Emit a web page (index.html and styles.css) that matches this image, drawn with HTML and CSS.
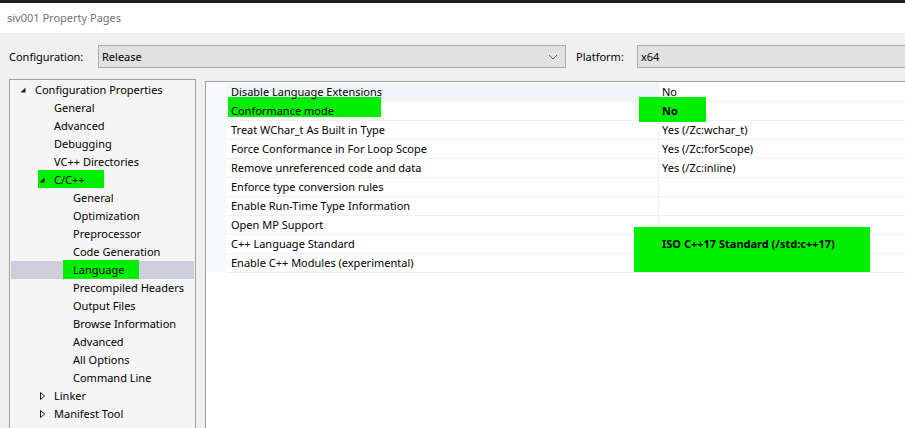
FILE: index.html
```html
<!DOCTYPE html>
<html>
<head>
<meta charset="utf-8">
<link rel="stylesheet" href="styles.css">
</head>
<body>
<div class="window">
  <div class="topstrip"></div>
  <div class="titlebar">siv001 Property Pages</div>
  <div class="main">
    <div class="config-row">
      <span class="label cfg-label">Configuration:</span>
      <div class="combo cfg-combo">
        <span>Release</span>
        <svg class="chev" width="10" height="6" viewBox="0 0 10 6"><path d="M1 1 L5 5 L9 1" fill="none" stroke="#606060" stroke-width="1"/></svg>
      </div>
      <span class="label plat-label">Platform:</span>
      <div class="combo plat-combo"><span>x64</span></div>
    </div>
    <div class="content">
      <div class="tree">
        <div class="node l0"><svg class="exp" width="6" height="6" viewBox="0 0 6 6"><polygon points="5.5,0.5 5.5,5.5 0.5,5.5" fill="#1e1e1e"/></svg><span>Configuration Properties</span></div>
        <div class="node l1"><span>General</span></div>
        <div class="node l1"><span>Advanced</span></div>
        <div class="node l1"><span>Debugging</span></div>
        <div class="node l1"><span>VC++ Directories</span></div>
        <div class="node l1"><div class="hl hl-cpp"></div><svg class="exp" width="6" height="6" viewBox="0 0 6 6"><polygon points="5.5,0.5 5.5,5.5 0.5,5.5" fill="#1e1e1e"/></svg><span>C/C++</span></div>
        <div class="node l2"><span>General</span></div>
        <div class="node l2"><span>Optimization</span></div>
        <div class="node l2"><span>Preprocessor</span></div>
        <div class="node l2"><span>Code Generation</span></div>
        <div class="node l2 selected"><div class="hl hl-lang"></div><span>Language</span></div>
        <div class="node l2"><span>Precompiled Headers</span></div>
        <div class="node l2"><span>Output Files</span></div>
        <div class="node l2"><span>Browse Information</span></div>
        <div class="node l2"><span>Advanced</span></div>
        <div class="node l2"><span>All Options</span></div>
        <div class="node l2"><span>Command Line</span></div>
        <div class="node l1"><svg class="col" width="6" height="8" viewBox="0 0 6 8"><polygon points="0.5,0.5 4.5,4 0.5,7.5" fill="none" stroke="#1e1e1e" stroke-width="1"/></svg><span>Linker</span></div>
        <div class="node l1"><svg class="col" width="6" height="8" viewBox="0 0 6 8"><polygon points="0.5,0.5 4.5,4 0.5,7.5" fill="none" stroke="#1e1e1e" stroke-width="1"/></svg><span>Manifest Tool</span></div>
        <div class="node l1"><svg class="col" width="6" height="8" viewBox="0 0 6 8"><polygon points="0.5,0.5 4.5,4 0.5,7.5" fill="none" stroke="#1e1e1e" stroke-width="1"/></svg><span>Resources</span></div>
      </div>
      <div class="grid">
        <div class="gutter"></div>
        <div class="rows">
          <div class="row first"><div class="name"><span>Disable Language Extensions</span></div><div class="value"><span>No</span></div></div>
          <div class="row"><div class="name"><span>Conformance mode</span></div><div class="value bold"><span>No</span></div></div>
          <div class="row"><div class="name"><span>Treat WChar_t As Built in Type</span></div><div class="value"><span>Yes (/Zc:wchar_t)</span></div></div>
          <div class="row"><div class="name"><span>Force Conformance in For Loop Scope</span></div><div class="value"><span>Yes (/Zc:forScope)</span></div></div>
          <div class="row"><div class="name"><span>Remove unreferenced code and data</span></div><div class="value"><span>Yes (/Zc:inline)</span></div></div>
          <div class="row"><div class="name"><span>Enforce type conversion rules</span></div><div class="value"></div></div>
          <div class="row"><div class="name"><span>Enable Run-Time Type Information</span></div><div class="value"></div></div>
          <div class="row"><div class="name"><span>Open MP Support</span></div><div class="value"></div></div>
          <div class="row"><div class="name"><span>C++ Language Standard</span></div><div class="value bold"><span>ISO C++17 Standard (/std:c++17)</span></div></div>
          <div class="row"><div class="name"><span>Enable C++ Modules (experimental)</span></div><div class="value"></div></div>
        </div>
        <div class="hl hl-conf"></div>
        <div class="hl hl-no"></div>
        <div class="hl hl-iso"></div>
      </div>
    </div>
  </div>
</div>
</body>
</html>
```

FILE: styles.css
```css
* { box-sizing: border-box; }
html, body { margin: 0; padding: 0; }
body {
  width: 905px;
  height: 428px;
  overflow: hidden;
  font-family: "Noto Sans", "Open Sans", sans-serif;
  font-size: 11px;
  color: #000000;
  background: #f0f0f0;
}
.window { width: 905px; height: 428px; overflow: hidden; }
.topstrip { height: 3px; background: #1f1f1f; }
.titlebar {
  height: 30px;
  background: #ffffff;
  color: #737373;
  padding-left: 7px;
  line-height: 30px;
}
.main { background: #f0f0f0; }
.config-row {
  display: flex;
  align-items: center;
  padding-top: 12px;
  height: 35px;
}
.label { line-height: 23px; }
.cfg-label { margin-left: 9px; width: 89px; }
.combo {
  height: 23px;
  border: 1px solid #adadad;
  background: #e1e1e1;
  display: flex;
  align-items: center;
  padding-left: 3px;
  position: relative;
}
.cfg-combo { width: 468px; }
.chev { position: absolute; right: 7px; top: 8px; }
.plat-label { margin-left: 10px; width: 61px; }
.plat-combo { flex: 1; margin-right: -20px; }
.content {
  display: flex;
  align-items: flex-start;
  margin-top: 11px;
  padding-left: 9px;
}
.tree {
  width: 187px;
  height: 400px;
  border: 1px solid #a0a0a0;
  border-bottom: none;
  background: #f5f5f5;
  flex-shrink: 0;
  padding-top: 1px;
}
.node {
  height: 18px;
  line-height: 18px;
  position: relative;
  display: flex;
  align-items: center;
  white-space: nowrap;
}
.node span { position: relative; z-index: 2; }
.l0 { padding-left: 25px; }
.l1 { padding-left: 44px; }
.l2 { padding-left: 63px; }
.node .exp { position: absolute; top: 6px; z-index: 2; }
.l0 .exp { left: 10px; }
.l1 .exp { left: 29px; }
.node .col { position: absolute; top: 5px; left: 30px; }
.selected { background: #cccedb; margin: 0 1px; padding-left: 62px; }
.grid {
  flex: 1;
  margin-left: 9px;
  margin-top: 2px;
  margin-right: -20px;
  height: 400px;
  border: 1px solid #a0a0a0;
  border-bottom: none;
  border-right: none;
  background: #ffffff;
  display: flex;
  align-items: flex-start;
  position: relative;
  padding-top: 1px;
}
.gutter {
  width: 21px;
  height: 190px;
  background: #f7f9fc;
  flex-shrink: 0;
  margin-top: -1px;
}
.rows { flex: 1; }
.row {
  display: flex;
  height: 19px;
  border-bottom: 1px solid #eef1f6;
  line-height: 18px;
}
.row span { position: relative; z-index: 2; }
.row.first { background: linear-gradient(to right, #f1f4f9 0, #f1f4f9 432px, #ffffff 432px); }
.name { width: 432px; padding-left: 4px; border-right: 1px solid #eef1f6; white-space: nowrap; }
.value { flex: 1; padding-left: 3px; white-space: nowrap; }
.bold { font-weight: bold; }
.hl { position: absolute; background: #00ee00; z-index: 1; }
.hl-cpp { left: 28px; top: -1px; width: 66px; height: 18px; }
.hl-lang { left: 52px; top: -1px; width: 76px; height: 19px; }
.hl-conf { left: 22px; top: 15px; width: 153px; height: 20px; }
.hl-no { left: 433px; top: 15px; width: 67px; height: 25px; }
.hl-iso { left: 428px; top: 145px; width: 236px; height: 45px; }
```
